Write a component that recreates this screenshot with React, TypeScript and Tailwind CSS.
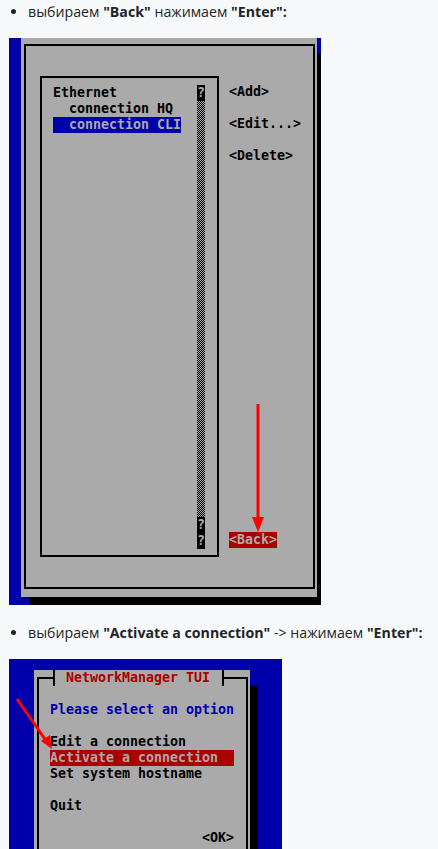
import React from "react";

const term =
  "font-['DejaVu_Sans_Mono','Liberation_Mono',monospace] font-bold text-[13.3px] leading-[16px] whitespace-pre";

const Bullet = ({ children }: { children: React.ReactNode }) => (
  <div className="flex items-center h-[21px]">
    <span className="ml-[2px] w-[5px] h-[5px] rounded-full bg-[#212529]" />
    <p className="ml-[12px] whitespace-nowrap">{children}</p>
  </div>
);

const Q = () => (
  <div className="h-[16px] w-[8px] bg-black text-[#aaaaaa] text-center">?</div>
);

const ConnectionsScreen = () => (
  <div className="relative mt-[16px] w-[312px] h-[567px] overflow-hidden bg-[#0000aa] pl-[12px]">
    <div className="w-[296px] h-[559px] bg-[#aaaaaa] shadow-[8px_16px_0_0_#000] pt-[6px] pl-[3px]">
      <div className="w-[291px] h-[545px] border-2 border-black flex pl-[14px] pt-[30px]">
        <div className={`w-[179px] h-[481px] border-2 border-black flex pt-[7px] pb-[6px] ${term}`}>
          <div className="w-[155px] pl-[11px] text-black">
            <div>Ethernet</div>
            <div>  connection HQ</div>
            <div>
              <span className="inline-block h-[16px] bg-[#0000aa] text-[#aaaaaa]">
                {"  connection CLI"}
              </span>
            </div>
          </div>
          <div className="w-[8px] flex flex-col">
            <Q />
            <div className="flex-1 bg-[repeating-conic-gradient(#000_0_25%,#aaaaaa_0_50%)] bg-[length:2px_2px]" />
            <Q />
            <Q />
          </div>
        </div>
        <div className={`ml-[10px] h-[481px] pt-[8px] pb-[9px] flex flex-col items-start text-black ${term}`}>
          <div>{"<Add>"}</div>
          <div className="mt-[16px]">{"<Edit...>"}</div>
          <div className="mt-[16px]">{"<Delete>"}</div>
          <div className="mt-auto bg-[#aa0000] text-[#aaaaaa]">{"<Back>"}</div>
        </div>
      </div>
    </div>
    <svg className="absolute left-0 top-0" width="312" height="567">
      <line x1="249" y1="366" x2="249" y2="484" stroke="#ff0000" strokeWidth="3" />
      <polygon points="243,479 255,479 249,494" fill="#ff0000" />
    </svg>
  </div>
);

const MenuScreen = () => (
  <div className="relative mt-[16px] w-[273px] h-[190px] overflow-hidden bg-[#0000aa] pl-[25px] pt-[11px]">
    <div className="w-[216px] h-[220px] bg-[#aaaaaa] shadow-[8px_16px_0_0_#000] pl-[3px] pt-[7px]">
      <div className={`relative w-[211px] h-[240px] border-2 border-b-0 border-black pl-[11px] pt-[23px] ${term}`}>
        <div className="absolute left-[14px] top-[-9px] h-[16px] border-x-2 border-black bg-[#aaaaaa] pl-[11px] pr-[12px] text-[#aa0000]">
          NetworkManager TUI
        </div>
        <div className="w-[184px] text-black">
          <div className="text-[#0000aa]">Please select an option</div>
          <div className="h-[16px]" />
          <div>Edit a connection</div>
          <div className="bg-[#aa0000] text-[#aaaaaa]">Activate a connection</div>
          <div>Set system hostname</div>
          <div className="h-[16px]" />
          <div>Quit</div>
          <div className="h-[16px]" />
          <div className="text-right">{"<OK>"}</div>
        </div>
      </div>
    </div>
    <svg className="absolute left-0 top-0" width="273" height="190">
      <line x1="8" y1="40" x2="38" y2="83" stroke="#ff0000" strokeWidth="3" />
      <polygon points="32,82 41,76 43,90" fill="#ff0000" />
    </svg>
  </div>
);

export default function App() {
  return (
    <div className="min-h-screen bg-[#f8f9fa] pl-[9px] pt-[1px] text-[14.2px] text-[#212529] font-['Open_Sans','Noto_Sans',sans-serif]">
      <Bullet>
        выбираем <b>"Back"</b> нажимаем <b>"Enter":</b>
      </Bullet>
      <ConnectionsScreen />
      <div className="mt-[17px]">
        <Bullet>
          выбираем <b>"Activate a connection"</b> -&gt; нажимаем <b>"Enter":</b>
        </Bullet>
      </div>
      <MenuScreen />
    </div>
  );
}
